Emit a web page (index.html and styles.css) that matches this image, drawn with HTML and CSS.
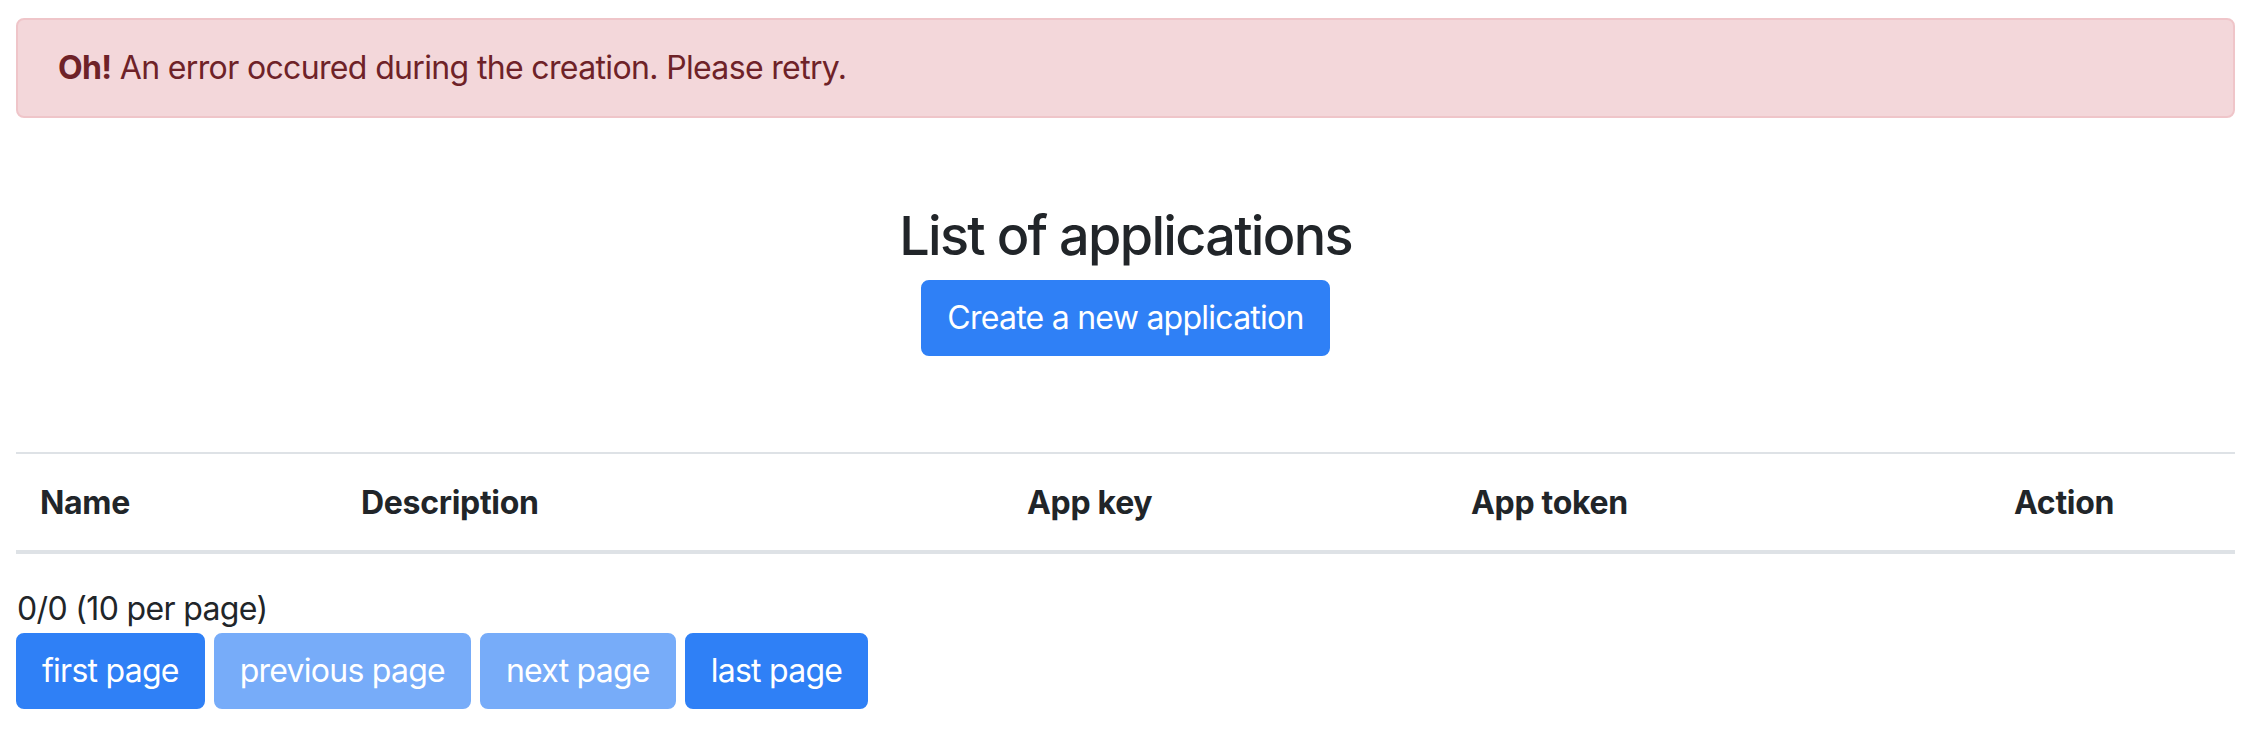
FILE: index.html
```html
<!DOCTYPE html>
<html lang="en">
<head>
<meta charset="utf-8">
<title>List of applications</title>
<link rel="stylesheet" href="styles.css">
</head>
<body>
<div class="page">
  <div class="alert"><strong>Oh!</strong> An error occured during the creation. Please retry.</div>

  <div class="header">
    <h3 class="title">List of applications</h3>
    <button class="btn" type="button">Create a new application</button>
  </div>

  <table class="table">
    <thead>
      <tr>
        <th class="c-name">Name</th>
        <th class="c-desc">Description</th>
        <th class="c-key">App key</th>
        <th class="c-token">App token</th>
        <th class="c-action">Action</th>
      </tr>
    </thead>
    <tbody></tbody>
  </table>

  <div class="pager">
    <div class="pager-info">0/0 (10 per page)</div>
    <div class="pager-buttons">
      <button class="btn" type="button">first page</button>
      <button class="btn disabled" type="button" disabled>previous page</button>
      <button class="btn disabled" type="button" disabled>next page</button>
      <button class="btn" type="button">last page</button>
    </div>
  </div>
</div>
</body>
</html>
```
FILE: styles.css
```css
* { box-sizing: border-box; }

html, body {
  margin: 0;
  background: #ffffff;
}

body {
  font-family: Inter, "Noto Sans", "Liberation Sans", sans-serif;
  font-size: 32px;
  line-height: 48px;
  letter-spacing: -0.65px;
  color: #212529;
}

.page {
  padding: 18px 13px 0 16px;
}

.alert {
  background: #f3d7da;
  border: 2px solid #efc5c9;
  color: #6e2228;
  border-radius: 8px;
  padding: 24px 40px;
  margin: 0 0 32px 0;
}

.alert strong { font-weight: 700; }

.header {
  text-align: center;
  padding-top: 52px;
}

.title {
  margin: 0 0 11px 0;
  font-size: 54px;
  line-height: 67px;
  font-weight: 500;
  letter-spacing: -1.7px;
  color: #212529;
}

.btn {
  display: inline-block;
  font-family: inherit;
  font-size: 32px;
  line-height: 48px;
  font-weight: 400;
  letter-spacing: -0.75px;
  color: #ffffff;
  background: #2f80f6;
  border: 2px solid #2f80f6;
  border-radius: 8px;
  padding: 12px 24px;
  margin: 0;
  cursor: pointer;
  vertical-align: top;
}

.btn.disabled {
  opacity: 0.65;
  cursor: default;
}

.table {
  width: 100%;
  table-layout: fixed;
  border-collapse: separate;
  border-spacing: 0;
  margin: 96px 0 31px 0;
}

.table th {
  text-align: left;
  font-weight: 700;
  letter-spacing: -0.3px;
  padding: 25px 24px 23px 24px;
  border-top: 2px solid #dee2e6;
  border-bottom: 4px solid #dee2e6;
  color: #212529;
}

.c-name { width: 321px; }
.c-desc { width: 666px; }
.c-key { width: 444px; }
.c-token { width: 543px; }
.c-action { width: 245px; }

.pager-info {
  padding-left: 1px;
}

.pager-buttons {
  display: flex;
  gap: 9px;
}
```
